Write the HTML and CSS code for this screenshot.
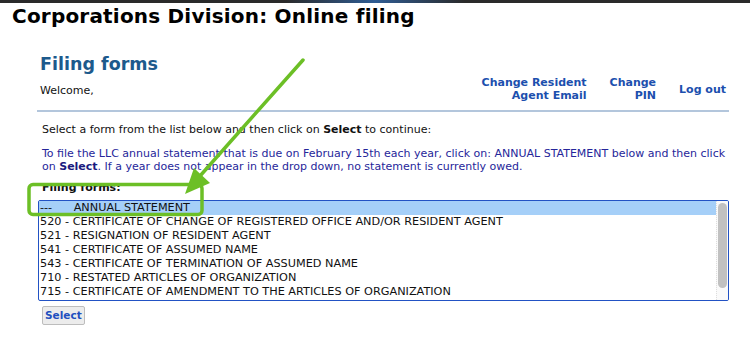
FILE: index.html
```html
<!DOCTYPE html>
<html>
<head>
<meta charset="utf-8">
<link rel="stylesheet" href="styles.css">
</head>
<body>
<div class="topbar"></div>
<h1 class="title">Corporations Division: Online filing</h1>
<div class="panel">
  <h2 class="heading">Filing forms</h2>
  <div class="userbar">
    <div class="welcome">Welcome,</div>
    <nav class="links">
      <a class="lnk">Change Resident<br>Agent Email</a>
      <a class="lnk">Change<br>PIN</a>
      <a class="lnk single">Log out</a>
    </nav>
  </div>
  <div class="content">
    <p class="intro">Select a form from the list below and then click on <b>Select</b> to continue:</p>
    <p class="note">To file the LLC annual statement that is due on February 15th each year, click on: ANNUAL STATEMENT below and then click on <b>Select</b>. If a year does not appear in the drop down, no statement is currently owed.</p>
    <div class="label">Filing forms:</div>
  </div>
  <div class="listbox">
    <ul class="options">
      <li class="opt sel">---&nbsp;&nbsp;&nbsp;&nbsp;&nbsp;&nbsp;ANNUAL STATEMENT</li>
      <li class="opt">520 - CERTIFICATE OF CHANGE OF REGISTERED OFFICE AND/OR RESIDENT AGENT</li>
      <li class="opt">521 - RESIGNATION OF RESIDENT AGENT</li>
      <li class="opt">541 - CERTIFICATE OF ASSUMED NAME</li>
      <li class="opt">543 - CERTIFICATE OF TERMINATION OF ASSUMED NAME</li>
      <li class="opt">710 - RESTATED ARTICLES OF ORGANIZATION</li>
      <li class="opt">715 - CERTIFICATE OF AMENDMENT TO THE ARTICLES OF ORGANIZATION</li>
    </ul>
    <div class="scroll"><div class="thumb"></div></div>
  </div>
  <div class="actions"><button class="btn">Select</button></div>
</div>
<svg class="annot" width="750" height="357" viewBox="0 0 750 357">
  <rect x="29" y="184.5" width="173" height="30" rx="4" fill="none" stroke="#6cbf26" stroke-width="3.5"/>
  <line x1="303" y1="60" x2="200" y2="176" stroke="#6cbf26" stroke-width="3.5" stroke-linecap="round"/>
  <polygon points="185,194 194,168 210,183" fill="#6cbf26"/>
</svg>
</body>
</html>
```
FILE: styles.css
```css
* { box-sizing: border-box; }
html, body { margin: 0; padding: 0; background: #fff; }
body {
  font-family: "DejaVu Sans", Verdana, sans-serif;
  font-size: 11px;
  color: #111;
  width: 750px;
  height: 357px;
  overflow: hidden;
  position: relative;
}
.topbar {
  height: 3px;
  background: linear-gradient(90deg, #2a2a2a 0%, #2a2a2a 38%, #2f5c93 50%, #2a2a2a 62%, #2a2a2a 100%);
}
.title {
  margin: 1px 0 0 12px;
  font-size: 20px;
  font-weight: bold;
  line-height: 24px;
  color: #000;
  letter-spacing: 0.2px;
}
.panel {
  margin: 0 21px 0 37px;
}
.heading {
  margin: 25px 0 0 3px;
  font-size: 17.5px;
  line-height: 22px;
  font-weight: bold;
  color: #1d5a8c;
}
.userbar {
  display: flex;
  align-items: flex-start;
  justify-content: space-between;
  border-bottom: 2px solid #b3c6dc;
  padding: 0 0 8px 3px;
}
.welcome { font-size: 11px; line-height: 13px; margin-top: 8.5px; }
.links {
  display: flex;
  align-items: center;
  margin-top: 1px;
}
.lnk {
  font-weight: bold;
  font-size: 11px;
  line-height: 13px;
  color: #1c4fae;
  text-align: right;
  margin-left: 23px;
}
.lnk.single { margin-left: 23px; margin-right: 3px; }
.content { padding: 0 0 0 5px; }
.intro { margin: 11px 0 0; line-height: 14px; }
.note { margin: 10px 0 0; color: #26269a; line-height: 13px; }
.note b { color: #1a1a80; }
.label { margin-top: 8px; font-weight: bold; line-height: 13px; }
.listbox {
  margin: 6px 0 0 1px;
  height: 101px;
  border: 1.5px solid #2252c4;
  border-radius: 2px;
  display: flex;
  overflow: hidden;
}
.options {
  list-style: none;
  margin: 0;
  padding: 0;
  flex: 1;
}
.opt {
  height: 14px;
  line-height: 14px;
  padding-left: 1px;
  font-size: 11.25px;
  white-space: nowrap;
  color: #111;
}
.opt.sel { background: #a5cff8; }
.scroll {
  width: 12px;
  padding: 2px 1px 0 1px;
  background: #fafafa;
  border-left: 1px dotted #ddd;
}
.thumb {
  height: 85px;
  background: #c1c1c1;
  border-radius: 5px;
}
.actions { padding: 5px 0 0 5px; }
.btn {
  font-family: "DejaVu Sans", Verdana, sans-serif;
  font-size: 10.5px;
  font-weight: bold;
  color: #1f4fbf;
  background: #ececec;
  border: 1px solid #bdbdbd;
  border-radius: 2px;
  padding: 1px 2px;
  height: 19px;
  line-height: 15px;
}
.annot {
  position: absolute;
  left: 0;
  top: 0;
  pointer-events: none;
}
```
